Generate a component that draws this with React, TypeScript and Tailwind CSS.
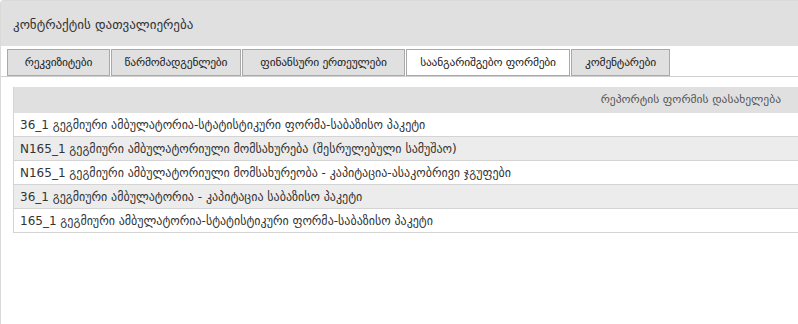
const tabs = [
  { label: "რეკვიზიტები", w: "w-[103px]" },
  { label: "წარმომადგენლები", w: "w-[130px]" },
  { label: "ფინანსური ერთეულები", w: "w-[163px]" },
  { label: "საანგარიშგებო ფორმები", w: "w-[164px]" },
  { label: "კომენტარები", w: "w-[99px]" },
];

const rows = [
  "36_1 გეგმიური ამბულატორია-სტატისტიკური ფორმა-საბაზისო პაკეტი",
  "N165_1 გეგმიური ამბულატორიული მომსახურება (შესრულებული სამუშაო)",
  "N165_1 გეგმიური ამბულატორიული მომსახურეობა - კაპიტაცია-ასაკობრივი ჯგუფები",
  "36_1 გეგმიური ამბულატორია - კაპიტაცია საბაზისო პაკეტი",
  "165_1 გეგმიური ამბულატორია-სტატისტიკური ფორმა-საბაზისო პაკეტი",
];

export default function App() {
  const active = 3;
  return (
    <div
      className="w-[798px] h-[324px] bg-white overflow-hidden"
      style={{ fontFamily: '"DejaVu Sans", "Liberation Sans", sans-serif' }}
    >
      <div className="h-full border-l border-t border-[#d9d9d9] rounded-tl-[4px] flex flex-col">
        {/* Header */}
        <div className="h-[45px] bg-[#e0e0e0] flex items-center pl-3 pt-[2px] text-[13px] text-[#333]">
          კონტრაქტის დათვალიერება
        </div>

        {/* Tabs */}
        <div className="flex items-end gap-[1px] pl-[6px] border-b border-[#cfcfcf] pt-[3px]">
          {tabs.map((t, i) => (
            <div
              key={t.label}
              className={`${t.w} h-[27px] flex items-center justify-center whitespace-nowrap border border-[#a9a9a9] text-[11.5px] tracking-[-0.2px] text-[#222] ${
                i === active ? "bg-white" : "bg-[#e0e0e0]"
              }`}
            >
              {t.label}
            </div>
          ))}
        </div>

        {/* Table */}
        <div className="pl-3 pt-[10px]">
          <div className="border-l border-[#d4d4d4]">
            <div className="h-[26px] bg-[#e0e0e0] flex items-center justify-end pr-[17px] text-[11.5px] text-[#555]">
              რეპორტის ფორმის დასახელება
            </div>
            {rows.map((r, i) => (
              <div
                key={i}
                className={`h-[24px] flex items-center pl-[6px] border-b border-[#d4d4d4] text-[12px] text-[#333] ${
                  i % 2 === 1 ? "bg-[#ececec]" : "bg-white"
                }`}
              >
                {r}
              </div>
            ))}
          </div>
        </div>
      </div>
    </div>
  );
}
